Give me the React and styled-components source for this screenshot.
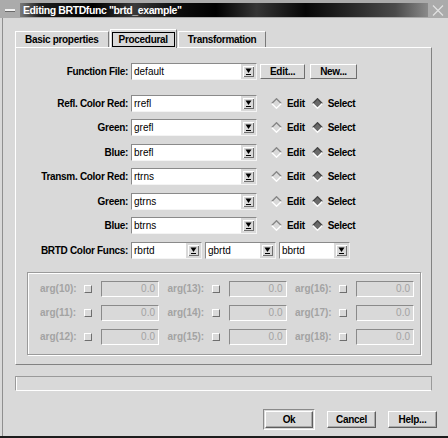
import React from "react";
import styled, { createGlobalStyle } from "styled-components";

const GlobalStyle = createGlobalStyle`
  * { box-sizing: border-box; }
  html, body { margin: 0; padding: 0; background: #d9d9d9; }
  body { font-family: "Liberation Sans", Arial, sans-serif; }
`;

const Frame = styled.div`
  width: 448px;
  height: 438px;
  display: flex;
  flex-direction: column;
  background: #d9d9d9;
  border-bottom: 2px solid #1c1c1c;
  overflow: hidden;
`;

const TitleBar = styled.div`
  height: 18px;
  flex: none;
  display: flex;
  align-items: stretch;
  background: #ababab;
  padding: 3px 0 1px 0;
`;

const MinButton = styled.div`
  width: 20px;
  display: flex;
  align-items: center;
  justify-content: center;
  span {
    display: block;
    width: 10px;
    height: 2px;
    background: #f2f2f2;
    box-shadow: 0 1px 0 #6a6a6a;
  }
`;

const TitleStrip = styled.div`
  flex: 1;
  padding-left: 3px;
  color: #fff;
  font-weight: bold;
  font-size: 10.5px;
  letter-spacing: -0.4px;
  line-height: 14px;
  white-space: nowrap;
  background: linear-gradient(
    90deg,
    #7a7a7a 0%,
    #1c1c1c 5%,
    #000 18%,
    #3a3a3a 28%,
    #0e0e0e 38%,
    #000 48%,
    #353535 58%,
    #070707 70%,
    #2a2a2a 82%,
    #4a4a4a 92%,
    #8a8a8a 100%
  );
`;

const CloseButton = styled.div`
  width: 20px;
  display: flex;
  align-items: center;
  justify-content: center;
`;

const Client = styled.div`
  flex: 1;
  display: flex;
  flex-direction: column;
  margin-left: 2px;
  border-left: 1px solid #8f8f8f;
  padding: 11px 0 0 12px;
`;

const TabRow = styled.div`
  height: 18px;
  display: flex;
  align-items: flex-end;
  gap: 1px;
`;

const Tab = styled.div`
  position: relative;
  z-index: ${(p) => (p.$active ? 1 : 0)};
  height: ${(p) => (p.$active ? 19 : 16)}px;
  margin-bottom: ${(p) => (p.$active ? -1 : 0)}px;
  padding: ${(p) => (p.$active ? "2px 1px 1px 1px" : "0 9px")};
  display: flex;
  align-items: center;
  background: #d9d9d9;
  border-top: 1px solid #fff;
  border-left: 1px solid #fff;
  border-right: 1px solid #7a7a7a;
  font-size: 10px;
  font-weight: bold;
  letter-spacing: -0.3px;
  line-height: 14px;
  white-space: nowrap;
`;

const TabFocus = styled.span`
  height: 100%;
  display: flex;
  align-items: center;
  padding: 0 6px;
  border: 1px solid #000;
`;

const Panel = styled.div`
  width: 417px;
  height: 318px;
  display: flex;
  flex-direction: column;
  padding-top: 15px;
  border: 1px solid;
  border-color: #fff #828282 #828282 #fff;
`;

const FieldRow = styled.div`
  height: 17px;
  flex: none;
  display: flex;
  align-items: center;
  margin-top: ${(p) => p.$top || 0}px;
`;

const Label = styled.div`
  width: 112px;
  margin-right: 3px;
  text-align: right;
  font-size: 10px;
  font-weight: bold;
  letter-spacing: -0.3px;
  white-space: nowrap;
`;

const Combo = styled.div`
  width: ${(p) => p.$w}px;
  height: 17px;
  flex: none;
  display: flex;
  border: 1px solid;
  border-color: #8a8a8a #f4f4f4 #f4f4f4 #8a8a8a;
  background: #d9d9d9;
`;

const ComboText = styled.div`
  flex: 1;
  background: #fff;
  padding-left: 2px;
  font-size: 10px;
  line-height: 15px;
  white-space: nowrap;
  overflow: hidden;
`;

const ComboArrow = styled.div`
  width: 15px;
  display: flex;
  align-items: center;
  justify-content: center;
`;

const SmallButton = styled.div`
  height: 15px;
  padding: 0 9px;
  margin-left: ${(p) => p.$left}px;
  display: flex;
  align-items: center;
  border: 1px solid;
  border-color: #fff #6e6e6e #6e6e6e #fff;
  font-size: 10px;
  font-weight: bold;
  letter-spacing: -0.3px;
`;

const RadioGroup = styled.div`
  display: flex;
  align-items: center;
  margin-left: 14px;
`;

const RadioText = styled.span`
  margin: 0 7px 0 5px;
  font-size: 10px;
  font-weight: bold;
  letter-spacing: -0.3px;
`;

const ComboStrip = styled.div`
  display: flex;
  gap: 3px;
`;

const ArgGroup = styled.div`
  width: 394px;
  height: 83px;
  margin: 13px 0 0 11px;
  padding: 8px 0 0 12px;
  display: flex;
  flex-direction: column;
  gap: 8px;
  border: 1px solid #9a9a9a;
  box-shadow: inset 1px 1px 0 #fff, 1px 1px 0 #fff;
`;

const ArgRow = styled.div`
  height: 16px;
  display: flex;
  gap: 8.5px;
`;

const ArgCell = styled.div`
  display: flex;
  align-items: center;
`;

const ArgLabel = styled.span`
  width: 44px;
  font-size: 10px;
  font-weight: bold;
  color: #a3a3a3;
  white-space: nowrap;
`;

const CheckBox = styled.span`
  width: 8px;
  height: 8px;
  margin-right: 9px;
  border: 1px solid;
  border-color: #fff #6e6e6e #6e6e6e #fff;
`;

const ArgField = styled.div`
  width: 58px;
  height: 16px;
  padding-right: 3px;
  text-align: right;
  font-size: 10px;
  line-height: 14px;
  color: #a3a3a3;
  border: 1px solid;
  border-color: #8a8a8a #fff #fff #8a8a8a;
`;

const Progress = styled.div`
  width: 417px;
  height: 15px;
  margin-top: 11px;
  border: 1px solid;
  border-color: #9a9a9a #9a9a9a #fff #9a9a9a;
  box-shadow: inset 1px 0 0 #fff;
`;

const ButtonRow = styled.div`
  width: 422px;
  height: 21px;
  margin-top: 18px;
  display: flex;
  align-items: center;
  justify-content: flex-end;
  gap: 12px;
`;

const DefaultRing = styled.div`
  padding: 1px;
  border: 1px solid;
  border-color: #8a8a8a #fff #fff #8a8a8a;
`;

const DialogButton = styled.div`
  width: ${(p) => p.$w}px;
  height: 17px;
  display: flex;
  align-items: center;
  justify-content: center;
  border: 1px solid;
  border-color: #fff #5e5e5e #5e5e5e #fff;
  box-shadow: inset -1px -1px 0 #a8a8a8;
  font-size: 10px;
  font-weight: bold;
  letter-spacing: -0.3px;
`;

const ArrowIcon = () => (
  <svg width="11" height="11" viewBox="0 0 11 11" shapeRendering="crispEdges">
    <rect x="0" y="0" width="11" height="11" fill="#d9d9d9" />
    <path d="M0.5 10.5 V0.5 H10.5" stroke="#fff" fill="none" />
    <path d="M10.5 0.5 V10.5 H0.5" stroke="#6e6e6e" fill="none" />
    <polygon points="2.5,2.5 8.5,2.5 5.5,7" fill="#000" shapeRendering="auto" />
    <rect x="3" y="8" width="5" height="1" fill="#000" />
  </svg>
);

const Diamond = ({ on }) => (
  <svg width="11" height="11" viewBox="0 0 11 11">
    {on && <polygon points="5.5,0.5 10.5,5.5 5.5,10.5 0.5,5.5" fill="#6a6a6a" />}
    <path d="M0.7 5.5 L5.5 0.7 L10.3 5.5" stroke={on ? "#454545" : "#858585"} strokeWidth="1.3" fill="none" />
    <path d="M0.7 5.5 L5.5 10.3 L10.3 5.5" stroke="#fff" strokeWidth="1.3" fill="none" />
  </svg>
);

const ComboBox = ({ value, w }) => (
  <Combo $w={w}>
    <ComboText>{value}</ComboText>
    <ComboArrow>
      <ArrowIcon />
    </ComboArrow>
  </Combo>
);

const colorRows = [
  { label: "Refl. Color Red:", value: "rrefl" },
  { label: "Green:", value: "grefl" },
  { label: "Blue:", value: "brefl" },
  { label: "Transm. Color Red:", value: "rtrns" },
  { label: "Green:", value: "gtrns" },
  { label: "Blue:", value: "btrns" },
];

const argRows = [
  [10, 13, 16],
  [11, 14, 17],
  [12, 15, 18],
];

export default function App() {
  return (
    <>
      <GlobalStyle />
      <Frame>
        <TitleBar>
          <MinButton>
            <span />
          </MinButton>
          <TitleStrip>Editing BRTDfunc "brtd_example"</TitleStrip>
          <CloseButton>
            <svg width="12" height="11" viewBox="0 0 12 11">
              <path d="M1 0.5 L11 10.5 M11 0.5 L1 10.5" stroke="#e2e2e2" strokeWidth="1.2" />
            </svg>
          </CloseButton>
        </TitleBar>
        <Client>
          <TabRow>
            <Tab>Basic properties</Tab>
            <Tab $active>
              <TabFocus>Procedural</TabFocus>
            </Tab>
            <Tab>Transformation</Tab>
          </TabRow>
          <Panel>
            <FieldRow>
              <Label>Function File:</Label>
              <ComboBox value="default" w={126} />
              <SmallButton $left={3}>Edit...</SmallButton>
              <SmallButton $left={5}>New...</SmallButton>
            </FieldRow>
            {colorRows.map((r, i) => (
              <FieldRow key={i} $top={i === 0 ? 14.5 : 7.5}>
                <Label>{r.label}</Label>
                <ComboBox value={r.value} w={126} />
                <RadioGroup>
                  <Diamond />
                  <RadioText>Edit</RadioText>
                  <Diamond on />
                  <RadioText>Select</RadioText>
                </RadioGroup>
              </FieldRow>
            ))}
            <FieldRow $top={7.5}>
              <Label>BRTD Color Funcs:</Label>
              <ComboStrip>
                <ComboBox value="rbrtd" w={71} />
                <ComboBox value="gbrtd" w={71} />
                <ComboBox value="bbrtd" w={71} />
              </ComboStrip>
            </FieldRow>
            <ArgGroup>
              {argRows.map((row, i) => (
                <ArgRow key={i}>
                  {row.map((n) => (
                    <ArgCell key={n}>
                      <ArgLabel>arg({n}):</ArgLabel>
                      <CheckBox />
                      <ArgField>0.0</ArgField>
                    </ArgCell>
                  ))}
                </ArgRow>
              ))}
            </ArgGroup>
          </Panel>
          <Progress />
          <ButtonRow>
            <DefaultRing>
              <DialogButton $w={48}>Ok</DialogButton>
            </DefaultRing>
            <DialogButton $w={49}>Cancel</DialogButton>
            <DialogButton $w={49}>Help...</DialogButton>
          </ButtonRow>
        </Client>
      </Frame>
    </>
  );
}
